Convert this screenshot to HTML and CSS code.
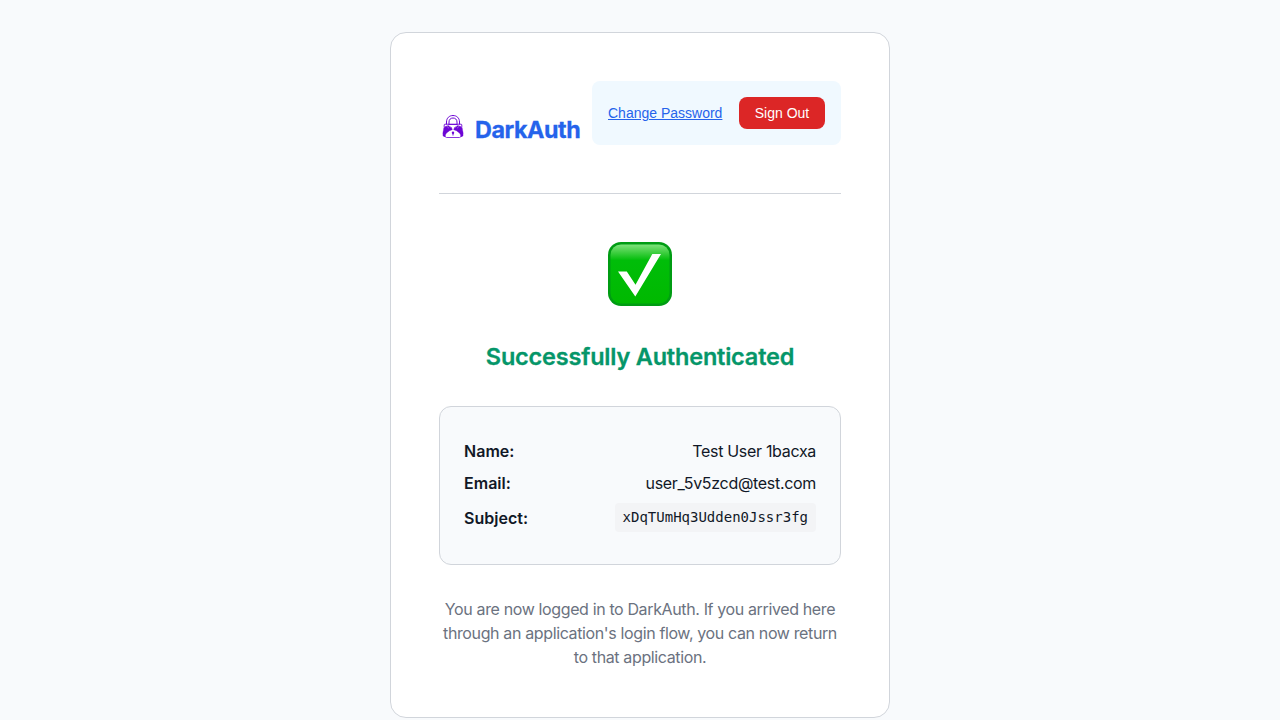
FILE: index.html
```html
<!DOCTYPE html>
<html lang="en">
<head>
<meta charset="utf-8">
<title>DarkAuth</title>
<link rel="stylesheet" href="styles.css">
</head>
<body>
<main class="card">
  <header class="header">
    <div class="brand">
      <svg class="logo" viewBox="0 0 28 28" fill="none" stroke="#6d05d5">
        <path d="M7.500 11.500V9C7.500 5 10.300 2.500 14 2.500s6.500 2.500 6.500 6.500v2.500" stroke-width="1"/>
        <path d="M10 11.500V9c0-2.500 1.700-4 4-4s4 1.500 4 4v2.500" stroke-width="1"/>
        <path d="M5.200 14.500V12q0-.8.800-.8h16q.8 0 .8.800v2.500M9.500 11.500h9" stroke-width=".9"/>
        <path d="M4.800 15l1.500-1.500 3-1 3.200 2 .8 2.200-2.800 1-3.200 2.500-2 3.800-1.300-1.500.2-3.500z" fill="#6d05d5" stroke-width=".4"/>
        <path d="M23.200 15l-1.500-1.500-3-1-3.200 2-.8 2.200 2.800 1 3.200 2.500 2 3.800 1.300-1.500-.2-3.500z" fill="#6d05d5" stroke-width=".4"/>
        <path d="M4.800 18.500c-.6 1.200-.6 2.800-.2 3.800l2 .9M23.200 18.500c.6 1.200.6 2.800.2 3.800l-2 .9" stroke-width="1.200"/>
        <path d="M6 23.200c.3 1 1 1.300 1.800 1.300h12.400c.8 0 1.500-.3 1.800-1.300" stroke-width=".8"/>
        <path d="M7.300 12.700l2.600 2.500M9.800 12.200l2 2.500M20.700 12.700l-2.600 2.500M18.200 12.200l-2 2.500" stroke="#fff" stroke-width=".35"/>
        <circle cx="14" cy="19.800" r="1.200" fill="#6d05d5" stroke="none"/>
        <path d="M14 20v2.500" stroke-width="1"/>
      </svg>
      <h1 class="brand-name">DarkAuth</h1>
    </div>
    <div class="actions">
      <a class="link">Change Password</a>
      <button class="signout">Sign Out</button>
    </div>
  </header>
  <svg class="check" viewBox="0 0 64 64">
    <defs>
      <linearGradient id="face" x1="0" y1="0" x2="0" y2="1">
        <stop offset="0" stop-color="#7ee37c"/><stop offset=".08" stop-color="#59d658"/>
        <stop offset=".27" stop-color="#00bd09"/><stop offset="1" stop-color="#00b900"/>
      </linearGradient>
    </defs>
    <rect width="64" height="64" rx="13" fill="#009c13"/>
    <rect x="2.500" y="2.500" width="59" height="59" rx="10.500" fill="url(#face)"/>
    <path d="M10 29.500h8.800l8.700 13.300L44.300 12H53L27.300 54.500z" fill="#fff"/>
  </svg>
  <h2 class="title">Successfully Authenticated</h2>
  <section class="info">
    <div class="row"><strong class="label">Name:</strong><span class="value">Test User 1bacxa</span></div>
    <div class="row"><strong class="label">Email:</strong><span class="value">user_5v5zcd@test.com</span></div>
    <div class="row"><strong class="label">Subject:</strong><code class="code">xDqTUmHq3Udden0Jssr3fg</code></div>
  </section>
  <p class="note">You are now logged in to DarkAuth. If you arrived here<br>through an application's login flow, you can now return<br>to that application.</p>
</main>
</body>
</html>
```
FILE: styles.css
```css
* { box-sizing: border-box; }
body { margin: 0; padding-top: 32px; height: 720px; overflow: hidden; background: #f8fafc; color: #111827; font: 16px/24px Inter, sans-serif; }
.card { width: 500px; height: 686px; margin: 0 auto; padding: 48px; background: #fff; border: 1px solid #d1d5db; border-radius: 16px; }
.header { display: flex; justify-content: space-between; height: 113px; border-bottom: 1px solid #d1d5db; }
.brand { display: flex; height: 64px; padding-top: 32px; gap: 8px; }
.logo { width: 28px; height: 28px; }
.brand-name { margin: 0; padding-top: 1px; font-size: 23.3px; line-height: 32px; font-weight: 700; letter-spacing: -0.42px; color: #2563eb; -webkit-text-stroke: 0.3px #2563eb; }
.actions { display: flex; align-items: center; justify-content: space-between; width: 249px; height: 64px; padding: 16px; border-radius: 8px; background: #f0f9ff; font: 14px/16px "Liberation Sans", sans-serif; white-space: nowrap; }
.link { color: #2563eb; text-decoration: underline; }
.signout { width: 86px; height: 32px; padding: 0; border: 0; border-radius: 8px; background: #dc2626; color: #fff; font: inherit; }
.check { display: block; width: 64px; height: 64px; margin: 48px auto 33px; }
.title { margin: 0 -20px 31px; text-align: center; font-size: 23.5px; line-height: 36px; font-weight: 600; letter-spacing: -0.2px; color: #059669; -webkit-text-stroke: 0.3px #059669; }
.info { height: 159px; padding: 32px 24px 24px; background: #f8fafc; border: 1px solid #d1d5db; border-radius: 12px; }
.row { display: flex; justify-content: space-between; align-items: center; margin-bottom: 8px; white-space: nowrap; }
.label { font-weight: 600; letter-spacing: 0.03px; }
.value { letter-spacing: -0.31px; }
.code { height: 29px; padding: 0 8px; border-radius: 4px; background: #f3f4f6; font: 14px/28px "DejaVu Sans Mono", monospace; }
.note { margin: 32px -10px 0; text-align: center; color: #6b7280; letter-spacing: -0.37px; white-space: nowrap; }
```
